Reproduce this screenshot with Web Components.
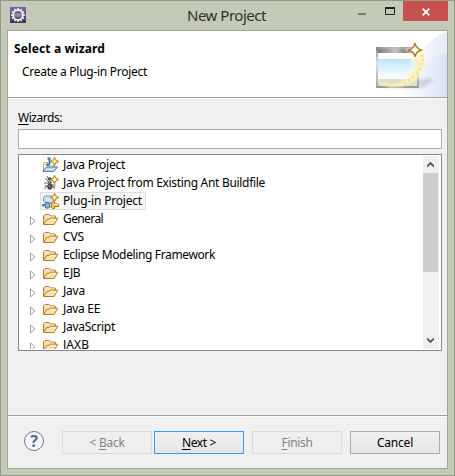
<!DOCTYPE html>
<html lang="en"><head><meta charset="utf-8"><title>New Project</title>
<style>html,body{margin:0;height:100%;overflow:hidden}body{font:12px/18px "Noto Sans","Open Sans",sans-serif;color:#000}</style></head>
<body><wizard-window></wizard-window>
<script>
const define=(name,html,init)=>customElements.define(name,class extends HTMLElement{
  connectedCallback(){ if(this.shadowRoot)return; this.attachShadow({mode:'open'}).innerHTML=typeof html==='function'?html(this):html; if(init)init(this); }
});
// Label whose tracking is adjusted so that its text takes the given width.
define('ui-label','<style>:host{display:inline-block;white-space:nowrap;flex:none}span{display:inline-block}::slotted(u){text-decoration:underline;text-underline-offset:2px;text-decoration-thickness:1px;text-decoration-skip-ink:none}</style><span><slot></slot></span>',el=>{
  const s=el.shadowRoot.querySelector('span'),w=+el.getAttribute('w');
  el.style.width=w+'px'; s.style.letterSpacing=(w-s.getBoundingClientRect().width)/el.textContent.length+'px';
});
const spark='<path d="M12.5 .7L13.9 3.1 16.3 4.5 13.9 5.9 12.5 8.3 11.1 5.9 8.7 4.5 11.1 3.1Z" fill="#fff6b8" stroke="#b98d1e" stroke-width="1.1"/><path d="M12.5 3v3M11 4.5h3" stroke="#fff"/>';
const art={
 folder:'<path d="M1.5 13.2V5L3 3.5h4L8.5 5H13l.5 1v1.5" fill="#f6d798" stroke="#b87830"/><path d="M2.5 6H12M3 4.6h4" stroke="#fff0c8"/><path d="M1.5 13.5L5 8.5l2-.1 1.3-1.2h7.5L12 13.5Z" fill="#fbe2a1" stroke="#b87830"/><path d="M5.5 9.6h2l1.3-1.2H14" stroke="#fff4d3" fill="none"/>',
 java:'<path d="M1.5 14V6.5l1-1h3V9h7v2" fill="#fff8df" stroke="#c8a65a"/><path d="M.8 14.4L4.5 10h11L12 14.4Z" fill="#c4dcfa" stroke="#4771b4"/><path d="M7.5 1v5.2c0 2-2.4 2.2-3.2.8M5.5 1.5h3" fill="none" stroke="#2e6ea8" stroke-width="1.8"/>'+spark,
 ant:'<path d="M3.5 3l3 4M2 8h5M2.5 14L7 9M13 14L9 9M13.5 10H8M5 1l2 4M2.5 11h4M13 12H9" stroke="#666" fill="none"/><ellipse cx="7.8" cy="4" rx="2" ry="1.8" fill="#4b4b4b"/><ellipse cx="7.8" cy="7.5" rx="2" ry="1.8" fill="#666"/><ellipse cx="7.8" cy="11.8" rx="2.5" ry="3" fill="#4c4c4c"/><path d="M7 11h1M7 7h1" stroke="#ccc"/>'+spark,
 plugin:'<path d="M1.5 6V4.5L3 3h7l2 4v3H3.5L1.5 8Z" fill="#c2d7ed" stroke="#7694b9"/><path d="M3 5h6M4 7h6" stroke="#edf5ff"/><path d="M.5 11.5h3v-2H6l1.5 1v4L6 15H3.5v-2h-3Z" fill="#8fb4de" stroke="#466b9e"/><path d="M7 11h2M7 14h2" stroke="#b68b30"/><path d="M9.5 10l1-1h2v2h4v2.5h-4v2h-2l-1-1Z" fill="#edc45c" stroke="#aa7a24"/><path d="M11 11.5h5" stroke="#fff0aa"/>'+spark};
define('tree-icon',el=>`<style>:host{display:block;width:17px;height:16px;flex:none}svg{display:block}</style><svg width="17" height="16">${art[el.getAttribute('kind')]}</svg>`);
define('tree-row',el=>{
 const folder=!el.hasAttribute('kind');
 return `<style>:host{display:grid;grid-template-columns:17px max-content;height:18px;padding-left:3px}.arrow{padding:6px 0 0 7px}.arrow svg{display:block}.item{display:flex;align-items:center;box-sizing:border-box;height:18px;padding:0 3px 0 1px;border:1px solid transparent;gap:4px}:host([selected]) .item{background:#f7f7f7;border-color:#dedede}ui-label{line-height:16px}</style>
 <div class="arrow">${folder?'<svg width="7" height="10"><path d="M.5 .9v8L5 4.9Z" fill="#fff" stroke="#a0a0a0"/></svg>':''}</div><div class="item"><tree-icon kind="${el.getAttribute('kind')||'folder'}"></tree-icon><ui-label w="${el.getAttribute('w')}">${el.getAttribute('label')}</ui-label></div>`});
define('scroll-bar',`<style>:host{display:flex;flex-direction:column;width:16px;height:193px;background:#f0f0f0}.b{height:17px;display:grid;place-items:center;padding-right:1px}.thumb{width:15px;height:99px;background:#cdcdcd}.fill{flex:1}svg{display:block}</style>
<div class="b"><svg width="7" height="7"><path d="M0 4.3L3.5.8 7 4.3v2.2L3.5 3.4 0 6.5Z" fill="#555"/></svg></div><div class="thumb"></div><div class="fill"></div><div class="b"><svg width="7" height="7"><path d="M0 .5l3.5 3.1L7 .5v2.2L3.5 6.2 0 2.7Z" fill="#555"/></svg></div>`);
define('wizard-tree',`<style>:host{box-sizing:border-box;width:424px;height:197px;display:flex;background:#fff;border:1px solid #828790;padding:1px;overflow:hidden}.rows{flex:1;height:193px;overflow:hidden}scroll-bar{margin-right:1px}</style><div class="rows"><slot></slot></div><scroll-bar></scroll-bar>`);
define('push-button',`<style>:host{display:flex;align-items:center;justify-content:center;box-sizing:border-box;width:90px;height:23px;border:1px solid #acacac;background:linear-gradient(#f0f0f0,#e5e5e5)}:host([primary]){border-color:#3399ff}:host([disabled]){background:#efefef;border-color:#d9d9d9;color:#838383}</style><slot></slot>`);
define('title-bar',()=>{let teeth='';for(let i=0;i<12;i++)teeth+=`<path d="M7.2 1h1.6v3H7.2Z" transform="rotate(${i*30} 8 8)" fill="#eee"/>`;
return `<style>:host{display:grid;grid-template-columns:178px 1fr 95px;height:29px;padding-right:6px}.app{padding:6px 0 0 9px}svg{display:block}.title{font-size:15px;line-height:28px;color:#303030;padding-left:8px}.controls{display:grid;grid-template-columns:27px 23px 45px;height:20px}.min{padding:12px 0 0 5px}.max{padding:6px 0 0 5px}.close{background:#c75050;display:grid;place-items:center}</style>
<div class="app"><svg width="17" height="17"><defs><linearGradient id="g" x2="0" y2="1"><stop stop-color="#7c68a0"/><stop offset="1" stop-color="#443260"/></linearGradient><linearGradient id="c" x2="0" y2="1"><stop stop-color="#4e426f"/><stop offset=".5" stop-color="#8e83aa"/><stop offset="1" stop-color="#302451"/></linearGradient></defs><path d="M0 0h16v16H0Z" fill="url(#g)"/>${teeth}<circle cx="8" cy="8" r="4.9" fill="url(#c)" stroke="#f3f3f3" stroke-width="1.7"/><path d="M4 7h8M4 9h8" stroke="#b5aac7" stroke-width=".7"/></svg></div>
<div class="title"><ui-label w="79">New Project</ui-label></div><div class="controls"><div class="min"><svg width="8" height="2"><path d="M0 0h8v2H0Z" fill="#777d70"/></svg></div><div class="max"><svg width="10" height="8"><path d="M.5 1h9v6.5h-9Z" fill="none" stroke="#222"/><path d="M0 1h10" stroke="#222" stroke-width="2"/></svg></div><div class="close"><svg width="8" height="8" style="margin-top:2px"><path d="M.7.7l6.6 6.6M7.3.7L.7 7.3" stroke="#fff" stroke-width="1.8"/></svg></div></div>`});
define('wizard-banner',()=>{let stars='';for(const [x,y] of [[50,25],[51,29],[50,33],[48,38],[45,42],[41,46],[37,49],[33,52]])stars+=`<path d="M${x-1.5} ${y}h3M${x} ${y-1.5}v3" stroke="#efda80" stroke-width=".9"/>`;
return `<style>:host{display:flex;justify-content:space-between;height:66px;background:#fff;border-bottom:1px solid #a0a0a0}.text{padding-left:6px;padding-top:9px}.text ui-label{display:block}.head{font-weight:700}.desc{margin:5px 0 0 8px}svg{display:block}</style>
<div class="text"><ui-label class="head" w="91">Select a wizard</ui-label><ui-label class="desc" w="125">Create a Plug-in Project</ui-label></div>
<svg width="75" height="66" viewBox="0 0 75 66"><defs><linearGradient id="bg"><stop offset=".2" stop-color="#fff"/><stop offset="1" stop-color="#d9e2f6"/></linearGradient><linearGradient id="arc"><stop offset=".3" stop-color="#fff"/><stop offset="1" stop-color="#e6ecfa"/></linearGradient><linearGradient id="bar"><stop stop-color="#777"/><stop offset=".45" stop-color="#c4c4c4"/><stop offset=".7" stop-color="#777"/><stop offset="1" stop-color="#ccc"/></linearGradient><linearGradient id="sky" x2="0" y2="1"><stop stop-color="#bce7fc"/><stop offset="1" stop-color="#fff"/></linearGradient><linearGradient id="edge" x2="0" y2="1"><stop stop-color="#777"/><stop offset=".4" stop-color="#ddd"/><stop offset="1" stop-color="#999"/></linearGradient><filter id="b" x="-30%" y="-30%" width="160%" height="160%"><feGaussianBlur stdDeviation="1.5"/></filter><filter id="s" x="-30%" y="-30%" width="160%" height="160%"><feGaussianBlur stdDeviation=".8"/></filter></defs>
<path d="M75 1Q56 7 46 28Q36 53 12 66H75Z" fill="url(#arc)"/><path d="M75 21Q57 25 45 42Q34 58 20 66H75Z" fill="url(#bg)"/><path d="M12 57l45-10 5 2-11 8H4Z" fill="#78749c" opacity=".25" filter="url(#b)"/>
<path d="M5 16h42v41H5Z" fill="#fff"/><path d="M5 16h42v6H5Z" fill="url(#bar)"/><path d="M5 17h40" stroke="#bbb"/><path d="M5 28h41v20H5Z" fill="url(#sky)"/><path d="M6 48h40v7H6Z" fill="#dedfca"/><path d="M5 28h41v1H5Z" fill="#ccd8db"/><path d="M5 16v40h41V29" fill="none" stroke="url(#edge)" stroke-width="1.8"/>
<path d="M38 26Q44 38 32 45L43 43 44 27Z" fill="#fff9df" opacity=".75" filter="url(#b)"/>
<path d="M2 47Q18 59 34 48Q46 40 45 21Q53 22 52 32Q51 48 35 54Q16 62 2 47Z" fill="#fff4b8" opacity=".85" filter="url(#s)"/>
${stars}<path d="M43 9V29M33 19H53" stroke="#fff6c7" stroke-width="4" opacity=".6" filter="url(#s)"/><path d="M43 12Q44 18 50 19Q44 20 43 26Q42 20 36 19Q42 18 43 12Z" fill="#fffbe2" stroke="#a77b31" stroke-width="1.4"/></svg>`});
define('help-mark',`<style>:host{display:grid;place-items:center;box-sizing:border-box;width:20px;height:20px;border:1px solid #657898;border-radius:50%;background:#f5f6f9;color:#536a91;font:bold 16px/18px "Noto Sans",sans-serif}</style>?`);
define('wizard-window',`<style>
:host{box-sizing:border-box;display:flex;flex-direction:column;width:455px;height:476px;border:1px solid #949b88;background:#c3cab7;padding:0 6px 6px}
title-bar{margin:0 -6px}.client{box-sizing:border-box;height:439px;width:441px;border:1px solid #a2a895;background:#f0f0f0;display:flex;flex-direction:column}
.body{border-top:1px solid #fff;padding:9px 10px 0 10px;height:307px}.cap{line-height:20px;height:21px}.field{box-sizing:border-box;width:424px;height:20px;background:#fff;border:1px solid #abadb3;margin-bottom:5px}
.foot{height:37px;border-top:1px solid #a0a0a0;box-shadow:inset 0 1px #fff;display:flex;padding:15px 7px 0 16px}.b1{margin-left:18px}.b2{margin-left:2px}.b3,.b4{margin-left:8px}
</style><title-bar></title-bar><div class="client"><wizard-banner></wizard-banner><div class="body"><div class="cap"><ui-label w="44"><u>W</u>izards:</ui-label></div><div class="field"></div><wizard-tree>
<tree-row kind="java" label="Java Project" w="62"></tree-row><tree-row kind="ant" label="Java Project from Existing Ant Buildfile" w="202"></tree-row><tree-row kind="plugin" selected label="Plug-in Project" w="79"></tree-row><tree-row label="General" w="40"></tree-row><tree-row label="CVS" w="21"></tree-row><tree-row label="Eclipse Modeling Framework" w="152"></tree-row><tree-row label="EJB" w="17"></tree-row><tree-row label="Java" w="22"></tree-row><tree-row label="Java EE" w="37"></tree-row><tree-row label="JavaScript" w="52"></tree-row><tree-row label="JAXB" w="26"></tree-row></wizard-tree></div>
<div class="foot"><help-mark></help-mark><push-button class="b1" disabled><ui-label w="35">&lt; <u>B</u>ack</ui-label></push-button><push-button class="b2" primary><ui-label w="34"><u>N</u>ext &gt;</ui-label></push-button><push-button class="b3" disabled><ui-label w="31"><u>F</u>inish</ui-label></push-button><push-button class="b4"><ui-label w="36">Cancel</ui-label></push-button></div></div>`);
</script></body></html>
